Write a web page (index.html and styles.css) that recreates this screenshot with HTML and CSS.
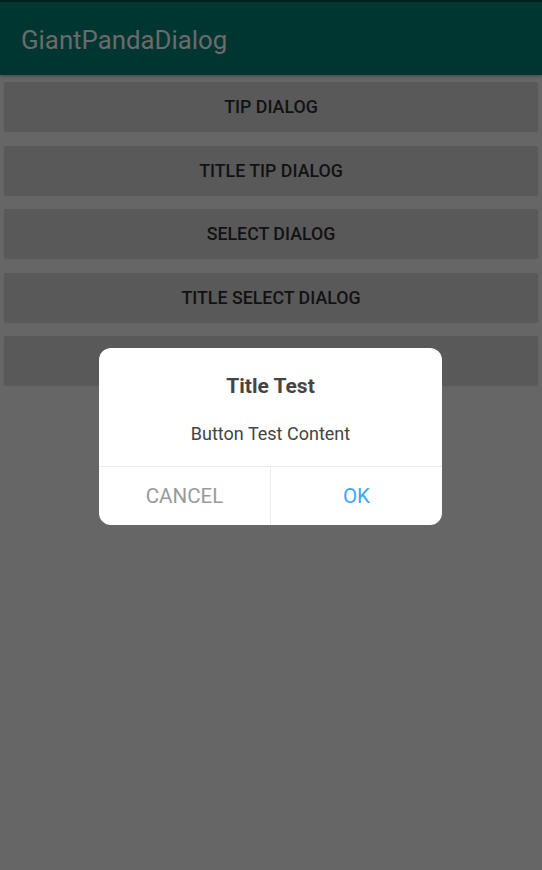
FILE: index.html
```html
<!DOCTYPE html>
<html>
<head>
<meta charset="utf-8">
<link rel="stylesheet" href="styles.css">
</head>
<body>
<div class="screen">
  <div class="status"></div>
  <header class="appbar"><span class="apptitle">GiantPandaDialog</span></header>
  <main class="list">
    <div class="btn">TIP DIALOG</div>
    <div class="btn">TITLE TIP DIALOG</div>
    <div class="btn">SELECT DIALOG</div>
    <div class="btn">TITLE SELECT DIALOG</div>
    <div class="btn"></div>
  </main>
  <div class="dialog">
    <div class="dtitle">Title Test</div>
    <div class="dcontent">Button Test Content</div>
    <div class="dactions">
      <div class="dact cancel">CANCEL</div>
      <div class="dact ok">OK</div>
    </div>
  </div>
</div>
</body>
</html>
```
FILE: styles.css
```css
html, body {
  margin: 0;
  padding: 0;
  background: #666666;
  font-family: Roboto, "Liberation Sans", sans-serif;
}
.screen {
  position: relative;
  width: 542px;
  height: 870px;
  background: #666666;
  overflow: hidden;
}
.status {
  height: 2px;
  background: #00241f;
}
.appbar {
  height: 70px;
  padding-top: 3px;
  background: #003631;
  display: flex;
  align-items: center;
  padding-left: 21px;
  box-shadow: 0 1px 3px rgba(0,0,0,0.35);
}
.apptitle {
  color: #6b6b6b;
  font-size: 25.8px;
}
.list {
  padding: 7px 4px 0 4px;
  display: flex;
  flex-direction: column;
  gap: 14.5px;
}
.btn {
  height: 49px;
  background: #595959;
  border-radius: 2px;
  box-shadow: 0 1px 1px rgba(0,0,0,0.12);
  display: flex;
  align-items: center;
  justify-content: center;
  color: #121212;
  font-size: 17.8px;
  font-weight: 500;
}
.dialog {
  position: absolute;
  left: 99px;
  top: 348px;
  width: 343px;
  height: 177px;
  background: #ffffff;
  border-radius: 12px;
  display: flex;
  flex-direction: column;
  overflow: hidden;
}
.dtitle {
  text-align: center;
  font-size: 21px;
  font-weight: 700;
  color: #444444;
  padding-top: 26px;
  line-height: 24px;
}
.dcontent {
  text-align: center;
  font-size: 18px;
  color: #444444;
  margin-top: 24px;
  line-height: 24px;
}
.dactions {
  margin-top: auto;
  height: 58px;
  border-top: 1px solid #ececec;
  display: flex;
}
.dact {
  flex: 1;
  display: flex;
  align-items: center;
  justify-content: center;
  font-size: 20.6px;
}
.cancel {
  color: #9a9a9a;
  border-right: 1px solid #ececec;
}
.ok {
  color: #42a5f5;
}
```
